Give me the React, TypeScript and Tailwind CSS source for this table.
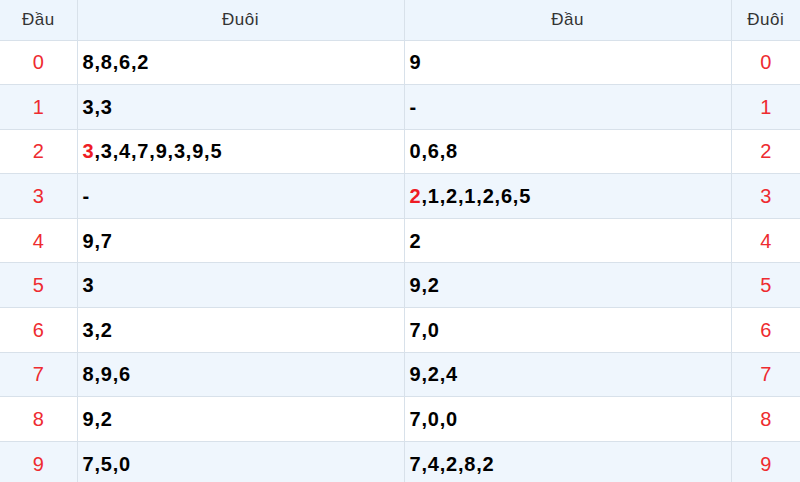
const rows: { head: number; duoi: string; dau: string; duoiHot?: boolean; dauHot?: boolean }[] = [
  { head: 0, duoi: '8,8,6,2', dau: '9' },
  { head: 1, duoi: '3,3', dau: '-' },
  { head: 2, duoi: '3,3,4,7,9,3,9,5', dau: '0,6,8', duoiHot: true },
  { head: 3, duoi: '-', dau: '2,1,2,1,2,6,5', dauHot: true },
  { head: 4, duoi: '9,7', dau: '2' },
  { head: 5, duoi: '3', dau: '9,2' },
  { head: 6, duoi: '3,2', dau: '7,0' },
  { head: 7, duoi: '8,9,6', dau: '9,2,4' },
  { head: 8, duoi: '9,2', dau: '7,0,0' },
  { head: 9, duoi: '7,5,0', dau: '7,4,2,8,2' },
];

function Value({ text, hot }: { text: string; hot?: boolean }) {
  if (!hot) return <>{text}</>;
  const [first, ...rest] = text.split(',');
  return (
    <>
      <span className="text-[#ee1c25]">{first}</span>,{rest.join(',')}
    </>
  );
}

export default function App() {
  return (
    <div className="w-[800px] bg-white font-['Liberation_Sans',Arial,sans-serif]">
      <table className="w-full table-fixed border-collapse">
        <colgroup>
          <col className="w-[77px]" />
          <col className="w-[327px]" />
          <col className="w-[327px]" />
          <col className="w-[69px]" />
        </colgroup>
        <thead>
          <tr className="h-[40px] bg-[#edf5fd] text-[17px] tracking-[0.5px] text-[#333]">
            <th className="border-r border-b border-[#d8e1ea] font-normal">Đầu</th>
            <th className="border-x border-b border-[#d8e1ea] font-normal">Đuôi</th>
            <th className="border-x border-b border-[#d8e1ea] font-normal">Đầu</th>
            <th className="border-l border-b border-[#d8e1ea] font-normal">Đuôi</th>
          </tr>
        </thead>
        <tbody>
          {rows.map((r, i) => (
            <tr key={r.head} className={`h-[44.6px] ${i % 2 === 1 ? 'bg-[#eff6fd]' : 'bg-white'}`}>
              <td className="border-r border-b border-[#d8e1ea] text-center text-[20px] text-[#ee2b30]">{r.head}</td>
              <td className="border-x border-b border-[#d8e1ea] pl-[5px] text-[20px] font-bold tracking-[0.8px] text-black">
                <Value text={r.duoi} hot={r.duoiHot} />
              </td>
              <td className="border-x border-b border-[#d8e1ea] pl-[5px] text-[20px] font-bold tracking-[0.8px] text-black">
                <Value text={r.dau} hot={r.dauHot} />
              </td>
              <td className="border-l border-b border-[#d8e1ea] text-center text-[20px] text-[#ee2b30]">{r.head}</td>
            </tr>
          ))}
        </tbody>
      </table>
    </div>
  );
}
